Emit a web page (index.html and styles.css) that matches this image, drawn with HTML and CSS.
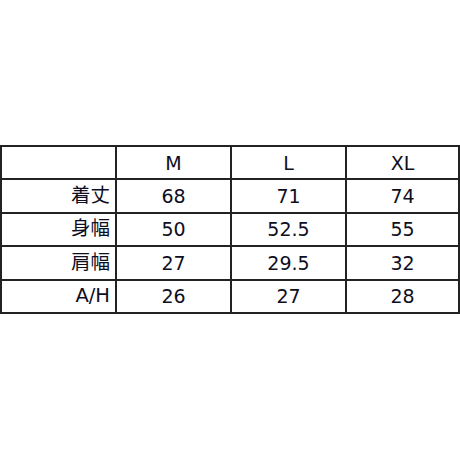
FILE: index.html
```html
<!DOCTYPE html>
<html lang="ja">
<head>
<meta charset="utf-8">
<link rel="stylesheet" href="styles.css">
</head>
<body>
<div class="wrap">
<table class="size-table">
  <colgroup>
    <col class="c-label"><col class="c-m"><col class="c-l"><col class="c-xl">
  </colgroup>
  <tr><td class="label"></td><td>M</td><td>L</td><td>XL</td></tr>
  <tr><td class="label">着丈</td><td>68</td><td>71</td><td>74</td></tr>
  <tr><td class="label">身幅</td><td>50</td><td>52.5</td><td>55</td></tr>
  <tr><td class="label">肩幅</td><td>27</td><td>29.5</td><td>32</td></tr>
  <tr><td class="label">A/H</td><td>26</td><td>27</td><td>28</td></tr>
</table>
</div>
</body>
</html>
```

FILE: styles.css
```css
html, body {
  margin: 0;
  padding: 0;
  background: #ffffff;
}
.wrap {
  padding-top: 145px;
  padding-left: 0;
}
.size-table {
  border-collapse: collapse;
  table-layout: fixed;
  width: 458px;
  font-family: "DejaVu Sans", "Noto Sans CJK JP", sans-serif;
  font-size: 19px;
  color: #0e0e22;
}
.c-label { width: 115px; }
.c-m { width: 115px; }
.c-l { width: 115px; }
.c-xl { width: 113px; }
.size-table td {
  border: 2px solid #222222;
  height: 31.4px;
  padding: 0 4px;
  text-align: center;
  vertical-align: middle;
  line-height: 20px;
}
.size-table td.label {
  text-align: right;
  padding-right: 5px;
  font-size: 19.5px;
}
```
